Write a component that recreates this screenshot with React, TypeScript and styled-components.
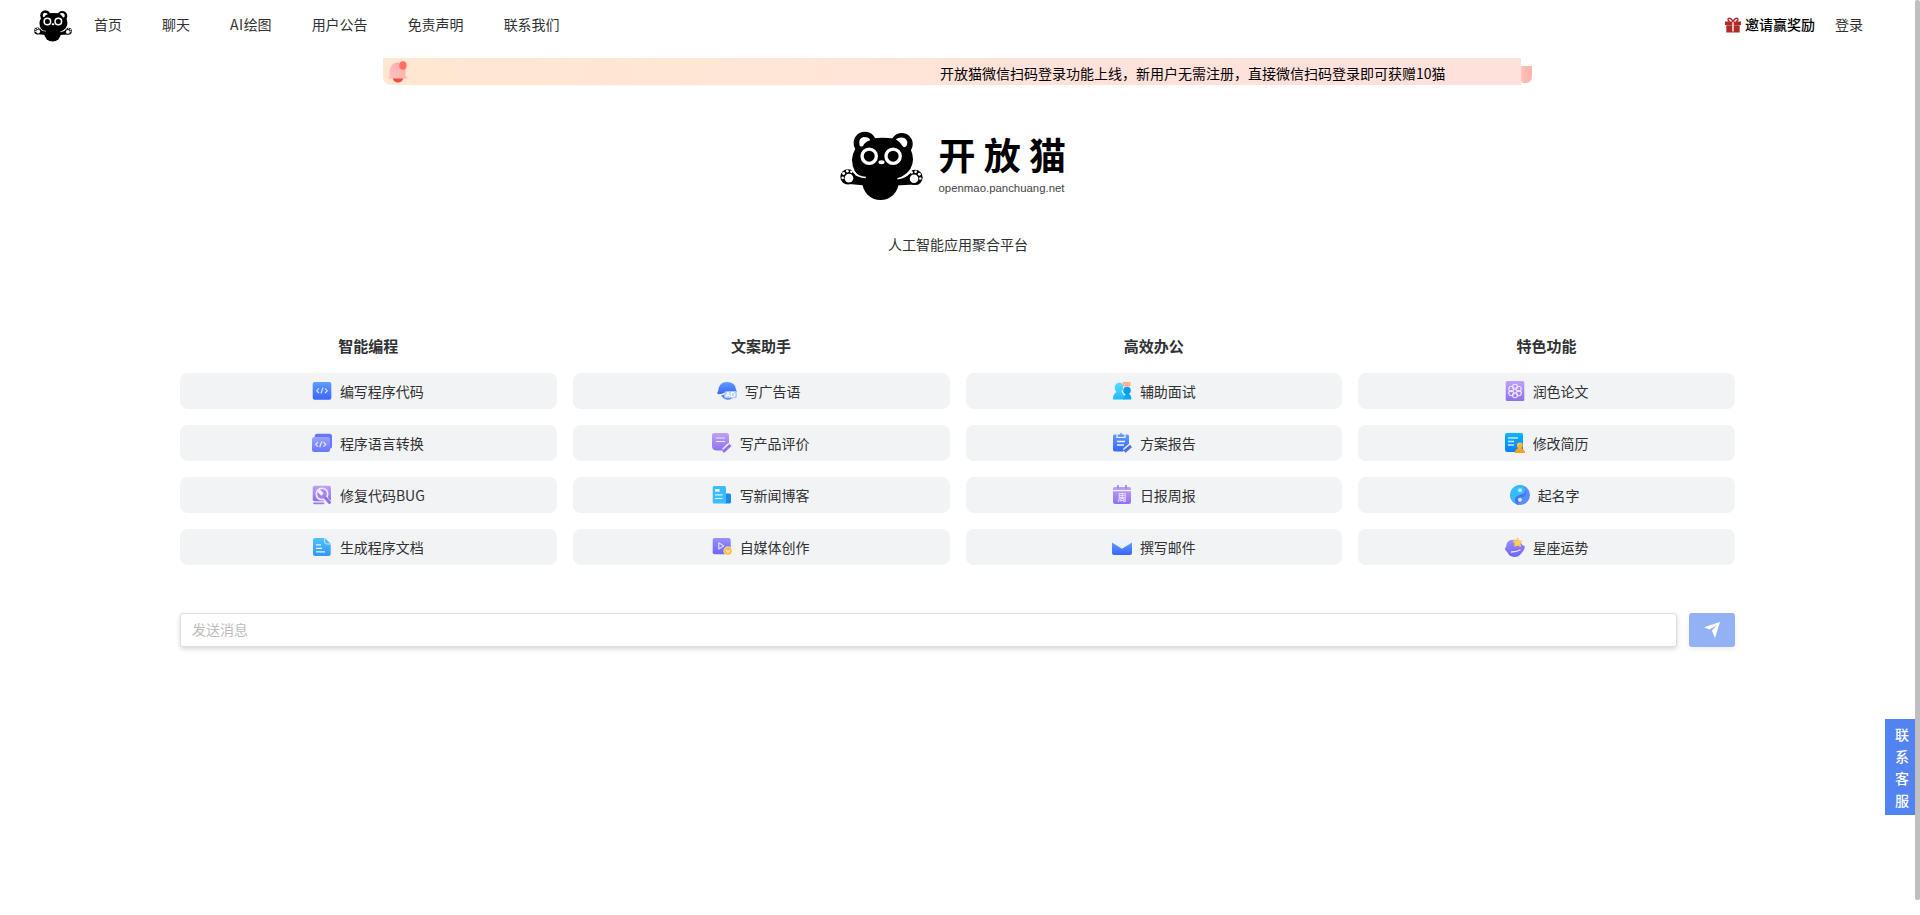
import React from "react";
import styled, { createGlobalStyle } from "styled-components";

const GlobalStyle = createGlobalStyle`
  *, *::before, *::after { box-sizing: border-box; }
  html, body { margin: 0; padding: 0; background: #fff; overflow: hidden; }
  body {
    font-family: "Noto Sans CJK SC", "Liberation Sans", sans-serif;
    font-size: 14px;
    color: #303133;
  }
`;

const Page = styled.div`
  display: flex;
  height: 915px;
  background: #fff;
`;

const Content = styled.div`
  position: relative;
  flex: 1;
  min-width: 0;
`;

const ScrollThumb = styled.div`
  width: 5px;
  height: 900px;
  border-radius: 2px;
  background: #bfbfbf;
`;

const Header = styled.header`
  display: flex;
  align-items: center;
  height: 50px;
  padding: 0 52px 0 34px;
`;

const HeaderLogo = styled.span`
  display: flex;
  width: 38px;
  margin: 2px 22px 0 0;
`;

const Nav = styled.nav`
  display: flex;
  gap: 40px;
  flex: 1;
`;

const NavLink = styled.a`
  padding-bottom: 2px;
  line-height: 20px;
  white-space: nowrap;
`;

const Latin = styled.span`
  letter-spacing: 0.5px;
`;

const Invite = styled.a`
  display: flex;
  align-items: center;
  gap: 4px;
  margin-right: 20px;
  color: #000;
  font-weight: 500;
  line-height: 20px;
`;

const InviteLabel = styled.span`
  padding-bottom: 2px;
`;

const Notice = styled.div`
  display: flex;
  align-items: flex-end;
  width: 1149px;
  height: 27px;
  margin: 8px auto 0 383px;
`;

const NoticeBar = styled.div`
  display: flex;
  align-items: center;
  width: 1138px;
  height: 27px;
  padding-left: 4px;
  border-radius: 0 0 0 8px;
  background: linear-gradient(90deg, #ffe7d2 0%, #ffe6d6 35%, #ffe2da 60%, #ffe1dc 100%);
`;

const NoticeText = styled.span`
  margin-left: 531px;
  padding-top: 2px;
  color: #000;
  line-height: 20px;
  white-space: nowrap;
`;

const NoticeTail = styled.div`
  width: 11px;
  height: 17px;
  margin-bottom: 2px;
  border-radius: 0 0 6px 2px;
  background: linear-gradient(90deg, #ffcac1, #ffb7ae 40%);
`;

const Brand = styled.section`
  display: flex;
  justify-content: center;
  gap: 16px;
  margin: 46px 0 0 -9px;
`;

const BrandMark = styled.div`
  width: 83px;
  height: 71px;
`;

const BrandWords = styled.div`
  display: flex;
  flex-direction: column;
  width: 128px;
`;

const BrandName = styled.h1`
  margin: 3px 0 0;
  color: #000;
  font-size: 37px;
  font-weight: 700;
  line-height: 40px;
  letter-spacing: 8.3px;
  white-space: nowrap;
`;

const BrandUrl = styled.span`
  margin-top: 7px;
  color: #444;
  font-family: "Liberation Sans", sans-serif;
  font-size: 11.4px;
  line-height: 14px;
`;

const Slogan = styled.p`
  margin: 32px 0 0 1px;
  text-align: center;
  line-height: 20px;
`;

const Columns = styled.main`
  display: grid;
  grid-template-columns: repeat(4, 1fr);
  gap: 16px;
  padding: 0 180px;
  margin-top: 82px;
`;

const Column = styled.section`
  display: flex;
  flex-direction: column;
  gap: 16px;
`;

const ColumnTitle = styled.h2`
  margin: 0;
  padding-bottom: 1px;
  font-size: 15px;
  font-weight: 700;
  line-height: 20px;
  text-align: center;
`;

const Tool = styled.button<{ $inset?: number }>`
  display: flex;
  align-items: center;
  justify-content: center;
  gap: 8px;
  height: 36px;
  padding: 0 ${(p) => p.$inset ?? 0}px 0 0;
  border: 0;
  border-radius: 8px;
  background: #f2f3f5;
  color: #303133;
  font: inherit;
  line-height: 20px;

  svg { display: block; }
`;

const ToolLabel = styled.span`
  white-space: nowrap;
`;

const Composer = styled.form`
  display: flex;
  gap: 12px;
  margin-top: 48px;
  padding: 0 180px;
`;

const MessageInput = styled.input`
  flex: 1;
  height: 34px;
  padding: 0 11px 2px;
  border: 1px solid #dcdfe6;
  border-radius: 3px;
  box-shadow: 0 2px 5px rgba(0, 0, 0, 0.16);
  font: inherit;
  outline: none;

  &::placeholder { color: #bcbcbc; opacity: 1; }
`;

const SendButton = styled.button`
  display: flex;
  align-items: center;
  justify-content: center;
  width: 46px;
  height: 34px;
  padding: 0;
  border: 0;
  border-radius: 3px;
  background: #93b1f5;
  box-shadow: 0 2px 5px rgba(0, 0, 0, 0.08);
`;

const ContactTab = styled.aside`
  position: absolute;
  top: 719px;
  right: 0;
  display: flex;
  flex-direction: column;
  align-items: center;
  width: 30px;
  height: 96px;
  padding: 4px 1px 0 5px;
  background: #5383f0;
  color: #fff;
  font-weight: 500;
  line-height: 22px;
`;

const Panda = () => (
  <svg viewBox="60 62 250 210" width="100%" style={{ display: "block" }}>
    <circle cx="135" cy="98" r="34" />
    <circle cx="246" cy="101" r="33" />
    <path d="M130 88Q155 82 188 82Q224 82 252 90Q278 112 280 148Q279 180 250 197L236 206L127 206Q97 187 96 148Q98 115 130 88Z" />
    <ellipse cx="182" cy="215" rx="55" ry="55" />
    <path d="M92 186Q112 202 136 203V226L88 222Z" />
    <path d="M278 188Q258 203 230 206V226L282 223Z" />
    <circle cx="84" cy="200" r="23" />
    <circle cx="286" cy="202" r="23" />
    <path d="M97 181Q112 201 138 202" fill="none" stroke="#fff" strokeWidth="4.500" />
    <path d="M276 182Q260 202 233 206" fill="none" stroke="#fff" strokeWidth="4.500" />
    <path d="M119 106Q114 83 131 80Q148 80 151 90Q137 93 129 107Q123 111 119 106Z" fill="#fff" />
    <path d="M228 87Q240 78 254 83Q267 92 261 106Q254 115 249 108Q243 96 228 87Z" fill="#fff" />
    <circle cx="148" cy="138" r="21.500" fill="#000" stroke="#fff" strokeWidth="10" />
    <circle cx="220" cy="138" r="21.500" fill="#000" stroke="#fff" strokeWidth="10" />
    <ellipse cx="185" cy="156" rx="9" ry="6" fill="#fff" />
    <g fill="#fff">
      <circle cx="87" cy="204" r="13" />
      <ellipse cx="68" cy="203" rx="4" ry="4" />
      <ellipse cx="71" cy="190" rx="4.500" ry="4.500" />
      <ellipse cx="82" cy="183" rx="4" ry="4" />
      <ellipse cx="94" cy="185" rx="3.500" ry="4" />
      <circle cx="283" cy="206" r="13" />
      <ellipse cx="276" cy="187" rx="3.500" ry="4" />
      <ellipse cx="288" cy="185" rx="4" ry="4" />
      <ellipse cx="299" cy="192" rx="4.500" ry="4.500" />
      <ellipse cx="302" cy="205" rx="4" ry="4" />
    </g>
  </svg>
);

const Gift = () => (
  <svg width="16" height="16" viewBox="0 0 16 16">
    <path d="M0 4.5H16V8H0ZM1.3 8.2H14.7V15.5H1.3Z" fill="#b02a2a" />
    <path d="M8 4.5C6.5 1.5 4.5.6 3.5 1.5S3.3 4.3 5 4.5M8 4.5C9.5 1.5 11.5.6 12.5 1.5S12.700 4.300 11 4.500" fill="none" stroke="#b02a2a" strokeWidth="1.5" />
    <path d="M7.200 5.200H8.800V14.500H7.200Z" fill="#f6dada" />
  </svg>
);

const Bell = () => (
  <svg width="22" height="23" viewBox="0 0 22 23">
    <defs>
      <linearGradient id="bell" x1="0" y1="1" x2="1" y2="0">
        <stop offset="0" stopColor="#ffc3c0" />
        <stop offset=".6" stopColor="#ffb5b3" />
        <stop offset="1" stopColor="#ff8a82" />
      </linearGradient>
    </defs>
    <path d="M5.500 18H16.500Q15 22.500 11 22.500T5.500 18Z" fill="#fb4a3c" />
    <path d="M11 2.500Q18.500 3 18.500 11V15Q18.500 16.500 20.500 17.500V18.500H1V17.500Q2.500 16.500 2.500 15V11Q3 3 11 2.500Z" fill="url(#bell)" />
    <ellipse cx="16" cy="5.500" rx="3.600" ry="4.300" fill="#ff6f66" />
  </svg>
);

const fills: Record<string, [string, string]> = {
  blue: ["#619cff", "#3a64ff"],
  indigo: ["#9aa5ff", "#6775fb"],
  violet: ["#bea2f6", "#8f71ee"],
  sky: ["#52c4ff", "#3495fb"],
  cyan: ["#55ddff", "#24baff"],
  azure: ["#08b8ff", "#087cff"],
  purple: ["#9a8fff", "#6d63f7"],
  gold: ["#ffc83c", "#ff9c1c"],
};

const IconDefs = () => (
  <svg width="0" height="0" style={{ position: "absolute" }}>
    <defs>
      {Object.entries(fills).map(([name, [from, to]]) => (
        <linearGradient key={name} id={name} x1="0" y1="0" x2="0" y2="1">
          <stop offset="0" stopColor={from} />
          <stop offset="1" stopColor={to} />
        </linearGradient>
      ))}
    </defs>
  </svg>
);

const icons: Record<string, React.ReactNode> = {
  code: (
    <>
      <rect x=".7" y="1" width="18.600" height="17.700" rx="2" fill="url(#blue)" />
      <path d="M7 7.300L4.700 9.700L7 12M13 7.300L15.300 9.700L13 12M11 6.800L9 12.500" fill="none" stroke="#d3e1ff" strokeWidth="1.200" />
    </>
  ),
  convert: (
    <>
      <rect x="2.700" y=".7" width="17.300" height="15" rx="2.500" fill="#6676ff" />
      <rect x="0" y="4" width="18" height="15" rx="2.500" fill="url(#indigo)" />
      <path d="M6 9L3.700 11.400L6 13.700M11.500 9L13.800 11.400L11.500 13.700M9.800 8.500L7.700 14.200" fill="none" stroke="#e0e4ff" strokeWidth="1.200" />
    </>
  ),
  bug: (
    <>
      <rect x=".7" y=".7" width="18.300" height="15.500" rx="2" fill="url(#violet)" />
      <path d="M12 12.500L17.500 18" stroke="#f2f3f5" strokeWidth="5" />
      <circle cx="10" cy="9" r="5.700" fill="#a184f1" stroke="#eee9fd" strokeWidth="1.700" />
      <path d="M6.500 5.500L10.500 9.500" stroke="#f4f0ff" strokeWidth="3.200" />
      <path d="M13.500 13L17.500 17.500" stroke="#8d70ec" strokeWidth="3" strokeLinecap="round" />
      <path d="M2 18.300H11.500" stroke="#9a7cf0" strokeWidth="1.700" strokeLinecap="round" />
    </>
  ),
  doc: (
    <>
      <path d="M3 1H13L18.700 6.800V17Q18.700 19 16.700 19H3Q1 19 1 17V3Q1 1 3 1Z" fill="url(#sky)" />
      <path d="M12.700 1V5Q12.700 7 14.700 7H18.700" fill="none" stroke="#c9ecff" strokeWidth="1" />
      <path d="M4 7.800H9M4 11.300H10M4 14.800H13" stroke="#e2f4ff" strokeWidth="1.200" />
    </>
  ),
  ad: (
    <>
      <path d="M1 10.500Q1.500 1 10 1T19 8.500L20 10.500Q11 9.700 5 12.800Q0 13.800 0 12Z" fill="url(#blue)" />
      <path d="M4 14.500Q10 12 16 12.500L15 17.500Q9 21 4 14.500Z" fill="#4c86fa" />
      <rect x="7" y="10.300" width="13" height="7" rx="2.500" fill="#a9cefd" />
      <text x="8.300" y="16.300" fill="#fff" fontFamily="Liberation Sans, sans-serif" fontSize="7" fontWeight="700">AD</text>
    </>
  ),
  review: (
    <>
      <path d="M2 0H15Q17 0 17 2.500V10L10 17.500H4Q0 17 0 13V2Q0 0 2 0Z" fill="url(#violet)" />
      <path d="M4 5H13M4 8.500H13" stroke="#eee8ff" strokeWidth="1.200" />
      <path d="M12 17.500L17.700 12" stroke="#f2f3f5" strokeWidth="5.200" />
      <path d="M11 18.800L18.500 12" stroke="#9270ee" strokeWidth="3" />
    </>
  ),
  news: (
    <>
      <rect x="12" y="8.500" width="7" height="10" rx="1.500" fill="#178ceb" />
      <path d="M2 1H12.500Q14 1 14 2.500V18.500H2Q.7 18.500.7 17V2.500Q.7 1 2 1Z" fill="#3cbcfa" />
      <rect x="3" y="4" width="4.500" height="2.800" fill="#e3f8ff" />
      <path d="M3 9.800H10.500M3 13.500H10.500" stroke="#d6f4ff" strokeWidth="1.200" />
    </>
  ),
  media: (
    <>
      <rect x=".7" y="1" width="18" height="16.300" rx="2" fill="url(#purple)" />
      <path d="M6.800 5.800L11.800 9L6.800 12Z" fill="none" stroke="#dedcff" strokeWidth="1.200" strokeLinejoin="round" />
      <circle cx="16" cy="14" r="4.200" fill="#ffbd35" stroke="#f2f3f5" strokeWidth=".7" />
      <path d="M14 13L16 15.300L18 13" fill="none" stroke="#fff1ca" strokeWidth="1.200" />
    </>
  ),
  interview: (
    <>
      <rect x="10.500" y="1" width="8" height="4.500" rx="1" fill="#ffac82" />
      <path d="M12 3.200H17" stroke="#ffd9c5" strokeDasharray="1 1" />
      <path d="M1 18.500Q.8 13 4.500 11Q2 8 3 4.500Q5 .8 8.800 1.800Q12.500 4 10.500 9L9.500 11Q12.500 13 12.500 18.500Z" fill="url(#cyan)" />
      <circle cx="15" cy="9.500" r="3.800" fill="#079cf0" />
      <path d="M11 18.500Q12 14 14 13H17Q19.500 14 19.300 18.500Z" fill="#00aaf6" />
    </>
  ),
  plan: (
    <>
      <path d="M2.500 1.500H15.500Q17 1.500 17 3V12L11 18.500H3Q1 18.500 1 16.500V3Q1 1.500 2.500 1.500Z" fill="url(#blue)" />
      <path d="M5 1V4.300H13V1" fill="none" stroke="#e6eeff" strokeWidth="1.300" />
      <path d="M9 0V3.500M6.500 2.600H11.500" stroke="#5c92ff" strokeWidth="1.300" />
      <path d="M5 8.500H13M5 12H12" stroke="#f0f4ff" strokeWidth="1.400" />
      <path d="M12.500 18L19 12.500" stroke="#f2f3f5" strokeWidth="5.300" />
      <path d="M12.500 18.500L19 13" stroke="#4d70ee" strokeWidth="3" />
    </>
  ),
  calendar: (
    <>
      <path d="M1 5V3.500Q1 2 2.500 2H17.500Q19 2 19 3.500V5ZM1 6.300H19V17Q19 19 17 19H3Q1 19 1 17Z" fill="url(#violet)" />
      <path d="M6 0V3.500M14 0V3.500" stroke="#9679ed" strokeWidth="1.500" />
      <text x="5.500" y="15.900" fill="#f3edff" fontSize="9" fontWeight="500">周</text>
    </>
  ),
  mail: (
    <>
      <path d="M0 3.500Q0 1.700 2 1.700H18Q20 1.700 20 3.500V8L10 12L0 8Z" fill="#edf2ff" />
      <path d="M0 5.500L10 11.700L20 5.500V16Q20 18 18 18H2Q0 18 0 16Z" fill="url(#blue)" />
    </>
  ),
  atom: (
    <>
      <rect x=".7" y="0" width="18.600" height="20" rx="1.500" fill="url(#violet)" />
      <g fill="none" stroke="#eee5ff" strokeWidth="1.100">
        {[0, 60, 120, 180, 240, 300].map((angle) => (
          <circle key={angle} cx="10" cy="5.700" r="2.500" transform={`rotate(${angle} 10 10)`} />
        ))}
      </g>
    </>
  ),
  resume: (
    <>
      <path d="M1.500 0H16.500Q18 0 18 1.500V19H2.500Q0 19 0 16.500V1.500Q0 0 1.500 0Z" fill="url(#azure)" />
      <path d="M3 5H13M3 8.500H9M3 12H9" stroke="#c9ebff" strokeWidth="1.300" />
      <path d="M9.700 20Q10 16 13 15.500Q10.300 11 13.500 9.700Q18 8.500 17.700 12.500L16.500 15.500Q19.700 16 20 20Z" fill="url(#gold)" />
    </>
  ),
  taiji: (
    <>
      <circle cx="10" cy="10" r="10" fill="#5a8cff" />
      <path d="M10 0A10 10 0 0 0 6 19Q3.500 13 7 11Q10 9.800 12.500 9Q16 7.500 15 3.500Q14 .5 10 0Z" fill="#32bdfd" />
      <path d="M6 19Q3.500 13 7 11Q10 9.800 12.500 9Q16 7.500 15 3.500Q17 9 14 11.500Q10 12 8.500 14Q7.500 17 9 20Q7.500 20 6 19Z" fill="#4278f5" />
      <circle cx="10" cy="5.300" r="2" fill="#c8f2ff" />
      <circle cx="10" cy="14.800" r="2" fill="#dbe7ff" />
    </>
  ),
  zodiac: (
    <>
      <path d="M1 10.500Q1 3 8 2.700Q14 2 17.500 8L20 9.500Q19.500 13 17 15.500Q14 20 9.500 20Q4 19.500 2.500 15.500Q-1 13 .3 10.500Z" fill="url(#purple)" />
      <path d="M6.500 15Q11 15 15 13" fill="none" stroke="#f0edff" strokeWidth="1.300" strokeLinecap="round" />
      <path d="M12.500 0L14.200 3.200L17.700 4L15.500 6.600L16 10L12.700 8.700L9.200 9.700L9.500 6.300L7.500 3.800L11 3.200Z" fill="#ffcb59" />
    </>
  ),
};

type ToolItem = { icon: string; label: string; inset?: number };

const columns: { title: string; tools: ToolItem[] }[] = [
  {
    title: "智能编程",
    tools: [
      { icon: "code", label: "编写程序代码", inset: 1 },
      { icon: "convert", label: "程序语言转换", inset: 1 },
      { icon: "bug", label: "修复代码BUG" },
      { icon: "doc", label: "生成程序文档", inset: 1 },
    ],
  },
  {
    title: "文案助手",
    tools: [
      { icon: "ad", label: "写广告语", inset: 5 },
      { icon: "review", label: "写产品评价", inset: 1 },
      { icon: "news", label: "写新闻博客", inset: 1 },
      { icon: "media", label: "自媒体创作", inset: 1 },
    ],
  },
  {
    title: "高效办公",
    tools: [
      { icon: "interview", label: "辅助面试" },
      { icon: "plan", label: "方案报告" },
      { icon: "calendar", label: "日报周报" },
      { icon: "mail", label: "撰写邮件" },
    ],
  },
  {
    title: "特色功能",
    tools: [
      { icon: "atom", label: "润色论文" },
      { icon: "resume", label: "修改简历" },
      { icon: "taiji", label: "起名字", inset: 4 },
      { icon: "zodiac", label: "星座运势" },
    ],
  },
];

export default function App() {
  return (
    <Page>
      <GlobalStyle />
      <IconDefs />
      <Content>
        <Header>
          <HeaderLogo><Panda /></HeaderLogo>
          <Nav>
            <NavLink>首页</NavLink>
            <NavLink>聊天</NavLink>
            <NavLink><Latin>AI</Latin>绘图</NavLink>
            <NavLink>用户公告</NavLink>
            <NavLink>免责声明</NavLink>
            <NavLink>联系我们</NavLink>
          </Nav>
          <Invite><Gift /><InviteLabel>邀请赢奖励</InviteLabel></Invite>
          <NavLink>登录</NavLink>
        </Header>

        <Notice>
          <NoticeBar>
            <Bell />
            <NoticeText>开放猫微信扫码登录功能上线，新用户无需注册，直接微信扫码登录即可获赠10猫</NoticeText>
          </NoticeBar>
          <NoticeTail />
        </Notice>

        <Brand>
          <BrandMark><Panda /></BrandMark>
          <BrandWords>
            <BrandName>开放猫</BrandName>
            <BrandUrl>openmao.panchuang.net</BrandUrl>
          </BrandWords>
        </Brand>
        <Slogan>人工智能应用聚合平台</Slogan>

        <Columns>
          {columns.map((column) => (
            <Column key={column.title}>
              <ColumnTitle>{column.title}</ColumnTitle>
              {column.tools.map(({ icon, label, inset }) => (
                <Tool key={label} $inset={inset}>
                  <svg width="20" height="20" viewBox="0 0 20 20">{icons[icon]}</svg>
                  <ToolLabel>{label}</ToolLabel>
                </Tool>
              ))}
            </Column>
          ))}
        </Columns>

        <Composer>
          <MessageInput placeholder="发送消息" />
          <SendButton type="button" aria-label="发送">
            <svg width="16" height="16" viewBox="0 0 16 16" fill="#fff">
              <path d="M16 0L0 5.300L5.500 7.500L12.500 3.200L7.800 8.800L11 16Z" />
            </svg>
          </SendButton>
        </Composer>

        <ContactTab>
          {["联", "系", "客", "服"].map((char) => <span key={char}>{char}</span>)}
        </ContactTab>
      </Content>
      <ScrollThumb />
    </Page>
  );
}
